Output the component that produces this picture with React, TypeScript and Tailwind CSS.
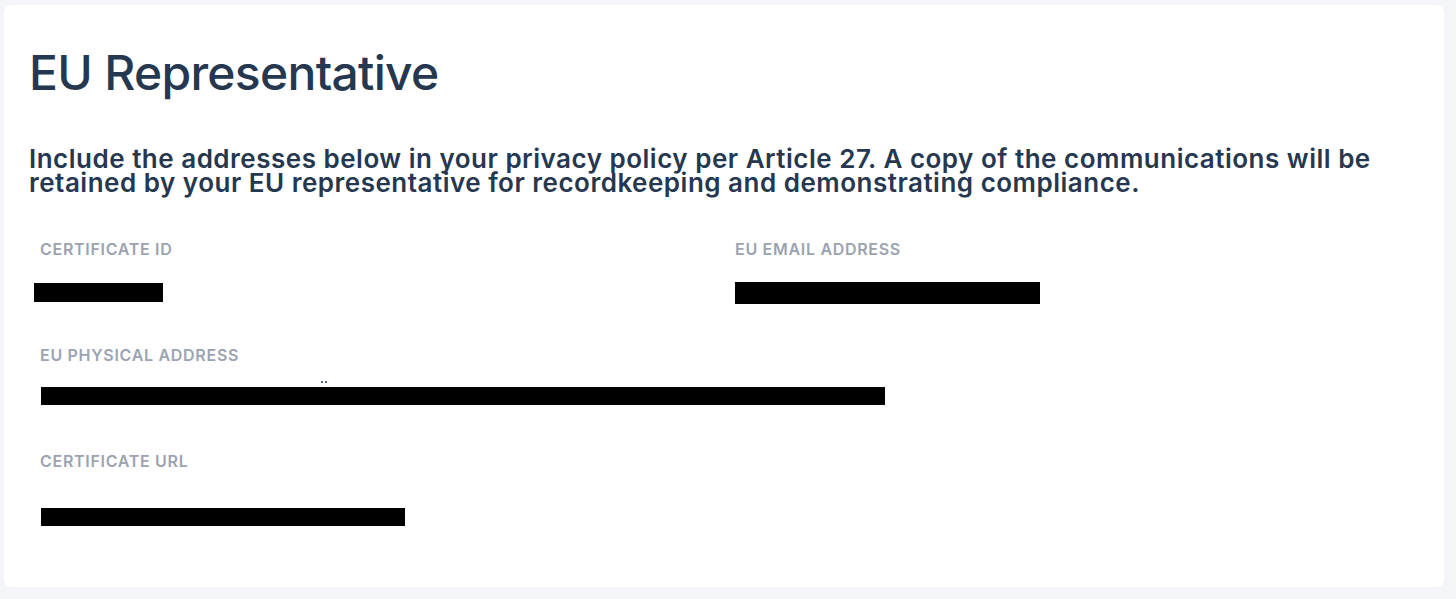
import React from 'react';

type FieldProps = {
  label: string;
  barWidth: number;
  barTop: number;
  barHeight: number;
  offset?: number;
  mark?: number;
};

// values are redacted in the source screenshot, so each one is a black bar
const Field: React.FC<FieldProps> = ({ label, barWidth, barTop, barHeight, offset = 0, mark }) => (
  <div className="px-[11px]">
    <div className="text-[16px] leading-[20px] font-semibold tracking-[0.7px] text-[#9ba3b1] uppercase">{label}</div>
    <div className="relative" style={{ marginTop: barTop, marginLeft: offset }}>
      <div className="bg-black" style={{ width: barWidth, height: barHeight }} />
      {mark !== undefined && (
        <span className="absolute top-[-6px] flex gap-[2px]" style={{ left: mark }}>
          <span className="w-[2px] h-[2px] rounded-full bg-[#253850]" />
          <span className="w-[2px] h-[2px] rounded-full bg-[#253850]" />
        </span>
      )}
    </div>
  </div>
);

export default function App() {
  return (
    <div className="min-h-screen bg-[#f4f5f9] pt-[5px] pl-[4px] pr-[12px]" style={{ fontFamily: 'Inter, sans-serif' }}>
      <div className="bg-white rounded-[8px] h-[582px] px-[25px] pt-[38px]">
        <h1 className="text-[48px] leading-[60px] font-medium tracking-[-0.7px] text-[#26384f]">EU Representative</h1>
        <p className="mt-[44px] text-[26px] leading-[24px] font-semibold tracking-[0.5px] text-[#26384f]">
          Include the addresses below in your privacy policy per Article 27. A copy of the communications will be retained by your EU representative for recordkeeping and demonstrating compliance.
        </p>
        <div className="mt-[44px] grid grid-cols-2 auto-rows-[106px]">
          <Field label="Certificate ID" barWidth={129} barTop={24} barHeight={19} offset={-6} />
          <Field label="EU Email Address" barWidth={305} barTop={23} barHeight={22} />
          <div className="col-span-2">
            <Field label="EU Physical Address" barWidth={844} barTop={22} barHeight={18} offset={1} mark={280} />
          </div>
          <div className="col-span-2">
            <Field label="Certificate URL" barWidth={364} barTop={37} barHeight={18} offset={1} />
          </div>
        </div>
      </div>
    </div>
  );
}
